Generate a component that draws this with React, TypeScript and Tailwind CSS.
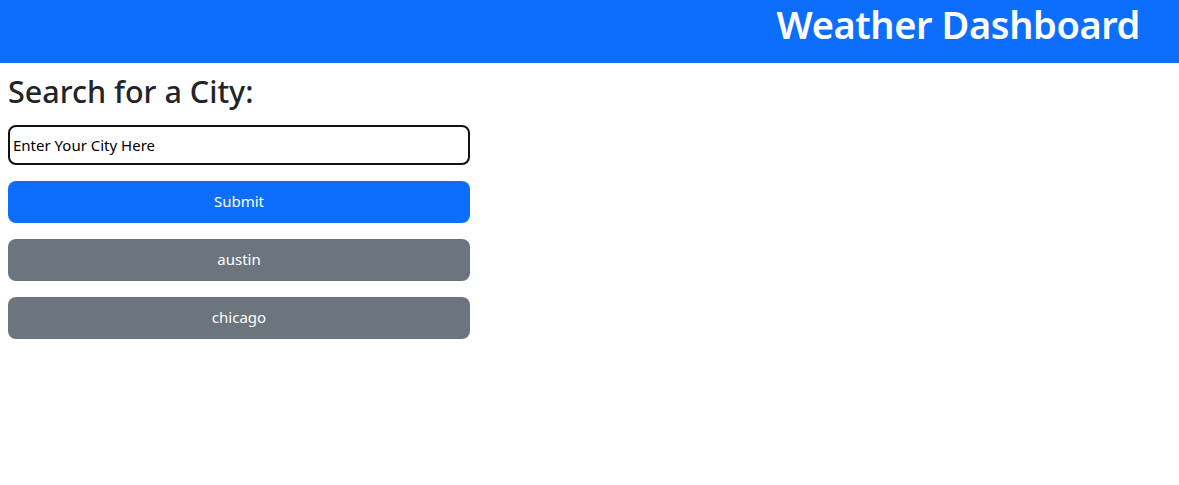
import React, { useState } from 'react';

const font = { fontFamily: '"Noto Sans", "Open Sans", Arial, sans-serif' };

export default function App() {
  const [city, setCity] = useState('');
  const history = ['austin', 'chicago'];

  return (
    <div className="min-h-screen bg-white text-[#212529]" style={font}>
      <header className="h-[63px] bg-[#0d6efd] flex items-start justify-end pr-[39px] pt-[2px]">
        <h1 className="text-[38px] font-semibold text-white leading-[1.2] tracking-[-0.4px]">Weather Dashboard</h1>
      </header>

      <main className="px-2 pt-[10px] w-[478px]">
        <h2 className="text-[30.5px] font-medium leading-[1.2] mb-[15px]">Search for a City:</h2>
        <input
          value={city}
          onChange={(e) => setCity(e.target.value)}
          placeholder="Enter Your City Here"
          className="w-full h-[40px] border-2 border-[#111] rounded-lg px-[3px] text-[15px] text-black placeholder:text-black outline-none"
        />
        <div className="mt-[16px] flex flex-col gap-4">
          <button className="h-[42px] w-full rounded-lg bg-[#0d6efd] text-white text-[15px]">Submit</button>
          {history.map((c) => (
            <button key={c} className="h-[42px] w-full rounded-lg bg-[#6c757d] text-white text-[15px]">
              {c}
            </button>
          ))}
        </div>
      </main>
    </div>
  );
}
